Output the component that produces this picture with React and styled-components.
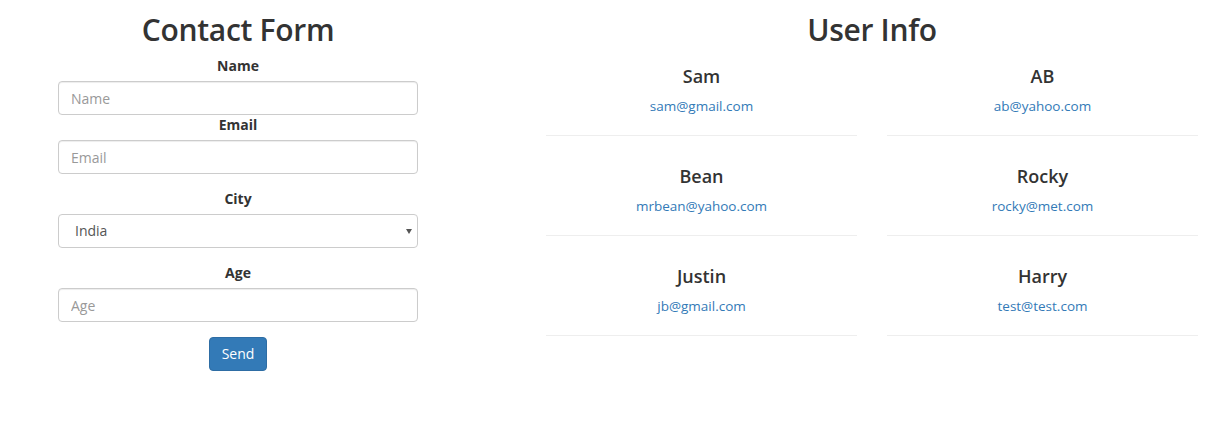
import React from "react";
import styled, { createGlobalStyle } from "styled-components";

const GlobalStyle = createGlobalStyle`
  body {
    margin: 0;
    background: #fff;
    font-family: "Open Sans", "Noto Sans", Arial, sans-serif;
    font-size: 14px;
    line-height: 20px;
    color: #333;
  }
  * { box-sizing: border-box; }
`;

const users = [
  { name: "Sam", email: "sam@gmail.com" },
  { name: "AB", email: "ab@yahoo.com" },
  { name: "Bean", email: "mrbean@yahoo.com" },
  { name: "Rocky", email: "rocky@met.com" },
  { name: "Justin", email: "jb@gmail.com" },
  { name: "Harry", email: "test@test.com" },
];

function App() {
  return (
    <>
      <GlobalStyle />
      <Page>
        <FormColumn>
          <Title>Contact Form</Title>
          <form onSubmit={(e) => e.preventDefault()}>
            <Label>Name</Label>
            <Input placeholder="Name" />
            <Label>Email</Label>
            <Input placeholder="Email" />
            <Group>
              <Label>City</Label>
              <SelectWrap>
                <Select defaultValue="India">
                  <option>India</option>
                  <option>USA</option>
                </Select>
                <Arrow />
              </SelectWrap>
            </Group>
            <Group>
              <Label>Age</Label>
              <Input placeholder="Age" />
            </Group>
            <ButtonRow>
              <SendButton type="submit">Send</SendButton>
            </ButtonRow>
          </form>
        </FormColumn>
        <InfoColumn>
          <Title>User Info</Title>
          <CardGrid>
            {users.map((u) => (
              <Card key={u.name}>
                <UserName>{u.name}</UserName>
                <UserEmail href="#">{u.email}</UserEmail>
                <Divider />
              </Card>
            ))}
          </CardGrid>
        </InfoColumn>
      </Page>
    </>
  );
}

const Page = styled.div`
  display: flex;
  padding-top: 13px;
`;

const FormColumn = styled.div`
  width: 476px;
  padding: 0 58px;
  text-align: center;
`;

const InfoColumn = styled.div`
  width: 712px;
  margin-left: 40px;
  padding: 0 30px;
`;

const Title = styled.h2`
  margin: 0 0 10px;
  font-size: 30px;
  line-height: 33px;
  font-weight: 600;
  letter-spacing: -0.3px;
  text-align: center;
  color: #333;
`;

const Label = styled.label`
  display: block;
  margin-bottom: 5px;
  font-weight: 700;
  text-align: center;
`;

const Input = styled.input`
  display: block;
  width: 100%;
  height: 34px;
  padding: 6px 12px;
  font: inherit;
  color: #555;
  border: 1px solid #ccc;
  border-radius: 4px;
  box-shadow: inset 0 1px 1px rgba(0, 0, 0, 0.075);
  &::placeholder {
    color: #999;
  }
`;

const Group = styled.div`
  margin-top: 15px;
`;

const SelectWrap = styled.div`
  position: relative;
`;

const Select = styled.select`
  display: block;
  width: 100%;
  height: 34px;
  padding: 6px 12px 6px 16px;
  font: inherit;
  color: #555;
  background: #fff;
  border: 1px solid #ccc;
  border-radius: 4px;
  appearance: none;
`;

const Arrow = styled.span`
  position: absolute;
  right: 6px;
  top: 15px;
  width: 0;
  height: 0;
  border-left: 3px solid transparent;
  border-right: 3px solid transparent;
  border-top: 5px solid #555;
  pointer-events: none;
`;

const ButtonRow = styled.div`
  margin-top: 15px;
  display: flex;
  justify-content: center;
`;

const SendButton = styled.button`
  height: 34px;
  padding: 6px 12px;
  font: inherit;
  color: #fff;
  background: #337ab7;
  border: 1px solid #2e6da4;
  border-radius: 4px;
  cursor: pointer;
`;

const CardGrid = styled.div`
  display: grid;
  grid-template-columns: 1fr 1fr;
  column-gap: 30px;
`;

const Card = styled.div`
  display: flex;
  flex-direction: column;
  align-items: center;
  padding: 10px 0 20px;
`;

const UserName = styled.h4`
  margin: 0 0 10px;
  font-size: 18px;
  line-height: 20px;
  font-weight: 600;
  color: #333;
`;

const UserEmail = styled.a`
  font-size: 13.5px;
  line-height: 20px;
  color: #337ab7;
  text-decoration: none;
`;

const Divider = styled.hr`
  align-self: stretch;
  margin: 19px 0 0;
  border: 0;
  border-top: 1px solid #eee;
`;

export default App;
